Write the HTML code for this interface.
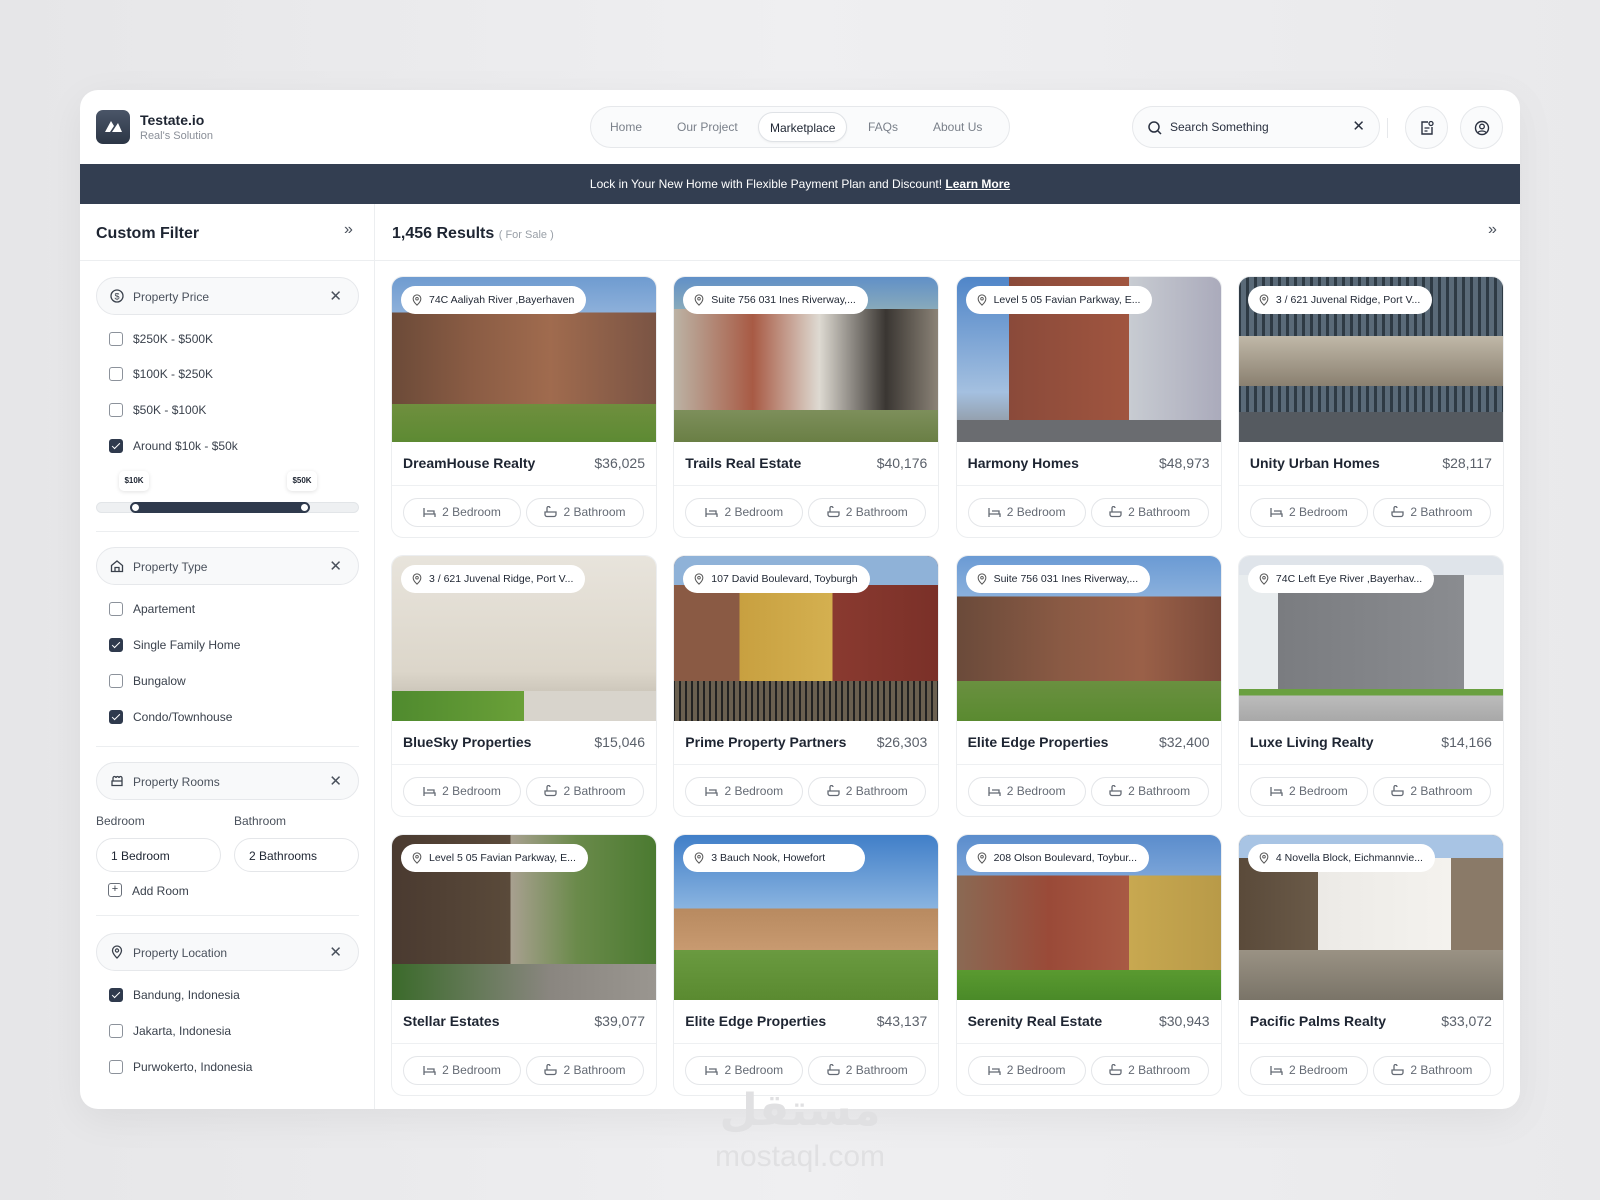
<!DOCTYPE html>
<html><head><meta charset="utf-8"><style>
*{box-sizing:border-box;margin:0;padding:0}
body{width:1600px;height:1200px;overflow:hidden;background:linear-gradient(90deg,#e6e6e8,#efeff1 50%,#e9e9eb);font-family:"Liberation Sans",sans-serif;color:#1e2532;position:relative}
.app{position:absolute;left:80px;top:90px;width:1440px;height:1019px;background:#fff;border-radius:18px;overflow:hidden;box-shadow:0 10px 40px rgba(0,0,0,.06)}
.abs{position:absolute}
.logo{left:16px;top:20px;width:34px;height:34px;border-radius:7px;background:linear-gradient(#4a5568,#2c3646)}
.brand{left:60px;top:22px;font-size:14px;font-weight:600;color:#1e2532}
.sub{left:60px;top:40px;font-size:11px;color:#8a8f98}
.nav{left:510px;top:16px;width:420px;height:42px;border:1px solid #e6e8eb;border-radius:21px;background:#fafbfc}
.nav span{position:absolute;top:13px;font-size:12px;color:#7a808a}
.nav .act{top:5px;height:30px;padding:8px 11px;background:#fff;border:1px solid #dfe2e6;border-radius:15px;color:#1e2532;box-shadow:0 1px 2px rgba(0,0,0,.05)}
.search{left:1052px;top:16px;width:248px;height:42px;border:1px solid #e6e8eb;border-radius:21px;background:#fafbfc}
.circ{top:16px;width:43px;height:43px;border:1px solid #e6e8eb;border-radius:50%;background:#fafbfc}
.banner{left:0;top:74px;width:1440px;height:40px;background:#333e51;color:#fff;font-size:12px;text-align:center;line-height:40px}
.banner u{font-weight:600}
.side{left:0;top:114px;width:295px;height:905px;border-right:1px solid #eceef0}
.hline{height:1px;background:#eceef0}
.pill{left:16px;width:263px;height:38px;border:1px solid #e6e8eb;border-radius:19px;background:#f8f9fa;font-size:12px;color:#4a515c}
.pill .t{position:absolute;left:36px;top:12px}
.pill .x{position:absolute;right:16px;top:9px;font-size:15px;color:#4a515c}
.pill svg{position:absolute;left:13px;top:11px}
.cb{left:29px;width:14px;height:14px;border:1.3px solid #8c929b;border-radius:3px}
.cb.on{background:#2f3a4d;border-color:#2f3a4d}
.cb.on:after{content:"";position:absolute;left:4px;top:1px;width:3px;height:7px;border:solid #fff;border-width:0 1.6px 1.6px 0;transform:rotate(45deg)}
.lbl{left:53px;font-size:12px;color:#3a414c}
.grid{position:absolute;left:311px;top:186px;display:grid;grid-template-columns:repeat(4,266px);column-gap:16.3px;row-gap:17px}
.card{width:266px;height:262px;border:1px solid #eceef0;border-radius:12px;position:relative;overflow:hidden;background:#fff}
.img{position:absolute;left:-1px;top:-1px;width:266px;height:166px;border-radius:12px 12px 0 0;overflow:hidden}
.loc{position:absolute;left:10px;top:10px;height:28px;padding:0 12px 0 28px;background:#fff;border-radius:14px;font-size:10.5px;line-height:28px;color:#1e2532;white-space:nowrap}
.loc svg{position:absolute;left:10px;top:8px}
.ct{position:absolute;left:11px;top:178px;font-size:14px;font-weight:600;color:#1e2532}
.pr{position:absolute;right:11px;top:178px;font-size:14px;color:#5a606a}
.dv{position:absolute;left:0;right:0;top:208px;height:1px;background:#eef0f2}
.bp{position:absolute;top:221px;height:29px;width:118px;border:1px solid #e4e6e9;border-radius:15px;font-size:12px;color:#646a74;text-align:center;line-height:27px}
.bp svg{vertical-align:-2px;margin-right:6px}
.b1{left:11px}.b2{left:134px}
</style></head><body>
<div class="app">
  <div class="abs logo"><svg width="34" height="34" viewBox="0 0 34 34"><path d="M9 22 L15 11 L18 16 L14 22Z M16 22 L22 13 L26 22Z" fill="#fff"/></svg></div>
  <div class="abs brand">Testate.io</div>
  <div class="abs sub">Real's Solution</div>
  <div class="abs nav">
    <span style="left:19px">Home</span><span style="left:86px">Our Project</span>
    <span class="act" style="left:167px">Marketplace</span>
    <span style="left:277px">FAQs</span><span style="left:342px">About Us</span>
  </div>
  <div class="abs search">
    <svg class="abs" style="left:14px;top:13px" width="16" height="16" viewBox="0 0 16 16"><circle cx="7" cy="7" r="5" fill="none" stroke="#2a3140" stroke-width="1.5"/><path d="M11 11l3 3" stroke="#2a3140" stroke-width="1.5"/></svg>
    <span class="abs" style="left:37px;top:13px;font-size:12px;color:#2a3140">Search Something</span>
    <span class="abs" style="right:14px;top:10px;font-size:15px;color:#2a3140">✕</span>
  </div>
  <div class="abs" style="left:1307px;top:28px;width:1px;height:20px;background:#e6e8eb"></div>
  <div class="abs circ" style="left:1325px"><svg class="abs" style="left:13px;top:13px" width="16" height="16" viewBox="0 0 16 16"><path d="M9 2H3v12h10V7" fill="none" stroke="#2a3140" stroke-width="1.4"/><circle cx="12" cy="3.5" r="2" fill="none" stroke="#2a3140" stroke-width="1.3"/><path d="M5.5 8h5M5.5 11h3" stroke="#2a3140" stroke-width="1.3"/></svg></div>
  <div class="abs circ" style="left:1380px"><svg class="abs" style="left:13px;top:13px" width="16" height="16" viewBox="0 0 16 16"><circle cx="8" cy="8" r="6.5" fill="none" stroke="#2a3140" stroke-width="1.4"/><circle cx="8" cy="6.5" r="2.3" fill="none" stroke="#2a3140" stroke-width="1.3"/><path d="M4 12.5c1.5-2 6.5-2 8 0" fill="none" stroke="#2a3140" stroke-width="1.3"/></svg></div>
  <div class="abs banner">Lock in Your New Home with Flexible Payment Plan and Discount! <u>Learn More</u></div>

  <div class="abs side"></div>
  <div class="abs hline" style="left:0;top:170px;width:1440px"></div>
  <div class="abs" style="left:16px;top:135px;font-size:16px;font-weight:600">Custom Filter</div>
  <div class="abs" style="left:264px;top:131px;font-size:16px;color:#4a515c">»</div>
  <div class="abs" style="left:312px;top:135px;font-size:16px;font-weight:600">1,456 Results <span style="font-size:11px;font-weight:400;color:#9aa0a8">( For Sale )</span></div>
  <div class="abs" style="left:1408px;top:131px;font-size:16px;color:#4a515c">»</div>

  <div class="abs pill" style="top:187px"><svg width="14" height="14" viewBox="0 0 14 14"><circle cx="7" cy="7" r="6" fill="none" stroke="#3a414c" stroke-width="1.3"/><text x="7" y="10.5" font-size="9" text-anchor="middle" fill="#3a414c" font-family="Liberation Sans">$</text></svg><span class="t">Property Price</span><span class="x">✕</span></div>
  <div class="abs cb" style="top:242px"></div><div class="abs lbl" style="top:242px">$250K - $500K</div>
  <div class="abs cb" style="top:277px"></div><div class="abs lbl" style="top:277px">$100K - $250K</div>
  <div class="abs cb" style="top:313px"></div><div class="abs lbl" style="top:313px">$50K - $100K</div>
  <div class="abs cb on" style="top:349px"></div><div class="abs lbl" style="top:349px">Around $10k - $50k</div>
  <div class="abs" style="left:39px;top:381px;width:30px;height:20px;background:#fff;border-radius:5px;box-shadow:0 1px 4px rgba(0,0,0,.12);font-size:8px;font-weight:700;text-align:center;line-height:20px">$10K</div>
  <div class="abs" style="left:207px;top:381px;width:30px;height:20px;background:#fff;border-radius:5px;box-shadow:0 1px 4px rgba(0,0,0,.12);font-size:8px;font-weight:700;text-align:center;line-height:20px">$50K</div>
  <div class="abs" style="left:16px;top:412px;width:263px;height:11px;background:#eef0f2;border:1px solid #e2e5e8;border-radius:6px"></div>
  <div class="abs" style="left:55px;top:412px;width:170px;height:11px;background:#2f3a4d"></div>
  <div class="abs" style="left:50px;top:412px;width:11px;height:11px;border-radius:50%;background:#fff;border:2.5px solid #2f3a4d"></div>
  <div class="abs" style="left:219px;top:412px;width:11px;height:11px;border-radius:50%;background:#fff;border:2.5px solid #2f3a4d"></div>
  <div class="abs hline" style="left:16px;top:441px;width:263px"></div>

  <div class="abs pill" style="top:457px"><svg width="14" height="14" viewBox="0 0 14 14"><path d="M1.5 6.5L7 2l5.5 4.5V12.5h-11z M5 12.5V8.5h4v4" fill="none" stroke="#3a414c" stroke-width="1.3"/></svg><span class="t">Property Type</span><span class="x">✕</span></div>
  <div class="abs cb" style="top:512px"></div><div class="abs lbl" style="top:512px">Apartement</div>
  <div class="abs cb on" style="top:548px"></div><div class="abs lbl" style="top:548px">Single Family Home</div>
  <div class="abs cb" style="top:584px"></div><div class="abs lbl" style="top:584px">Bungalow</div>
  <div class="abs cb on" style="top:620px"></div><div class="abs lbl" style="top:620px">Condo/Townhouse</div>
  <div class="abs hline" style="left:16px;top:656px;width:263px"></div>

  <div class="abs pill" style="top:672px"><svg width="14" height="14" viewBox="0 0 14 14"><path d="M2 7h10v4.5H2z M3 7V4a1.5 1.5 0 013 0M6 4a1.5 1.5 0 013 0M9 4a1.5 1.5 0 013 0V7" fill="none" stroke="#3a414c" stroke-width="1.3"/></svg><span class="t">Property Rooms</span><span class="x">✕</span></div>
  <div class="abs" style="left:16px;top:724px;font-size:12px;color:#4a515c">Bedroom</div>
  <div class="abs" style="left:154px;top:724px;font-size:12px;color:#4a515c">Bathroom</div>
  <div class="abs" style="left:16px;top:748px;width:125px;height:34px;border:1px solid #e4e6e9;border-radius:17px;font-size:12px;padding:10px 14px">1 Bedroom</div>
  <div class="abs" style="left:154px;top:748px;width:125px;height:34px;border:1px solid #e4e6e9;border-radius:17px;font-size:12px;padding:10px 14px">2 Bathrooms</div>
  <div class="abs" style="left:28px;top:793px;width:14px;height:14px;border:1.3px solid #6a707a;border-radius:3px;font-size:11px;line-height:11px;text-align:center;color:#3a414c">+</div>
  <div class="abs" style="left:52px;top:794px;font-size:12px;color:#3a414c">Add Room</div>
  <div class="abs hline" style="left:16px;top:825px;width:263px"></div>

  <div class="abs pill" style="top:843px"><svg width="14" height="14" viewBox="0 0 14 14"><path d="M7 13s4.5-4.2 4.5-7.5a4.5 4.5 0 00-9 0C2.5 8.8 7 13 7 13z" fill="none" stroke="#3a414c" stroke-width="1.3"/><circle cx="7" cy="5.5" r="1.6" fill="none" stroke="#3a414c" stroke-width="1.2"/></svg><span class="t">Property Location</span><span class="x">✕</span></div>
  <div class="abs cb on" style="top:898px"></div><div class="abs lbl" style="top:898px">Bandung, Indonesia</div>
  <div class="abs cb" style="top:934px"></div><div class="abs lbl" style="top:934px">Jakarta, Indonesia</div>
  <div class="abs cb" style="top:970px"></div><div class="abs lbl" style="top:970px">Purwokerto, Indonesia</div>

  <div class="grid">
<div class="card"><div class="img" style="background:linear-gradient(180deg,#6e9bd0 0,#8db0da 22%,transparent 22%),linear-gradient(90deg,#6b4a38 0,#8a5c44 30%,#a06b4e 60%,#7a5444 100%);"><div style="position:absolute;left:0;right:0;bottom:0;height:38px;background:linear-gradient(#6f8f3e,#5d8a33)"></div><div class="loc"><svg width="12" height="12" viewBox="0 0 14 14"><path d="M7 13s4.5-4.2 4.5-7.5a4.5 4.5 0 00-9 0C2.5 8.8 7 13 7 13z" fill="none" stroke="#555" stroke-width="1.2"/><circle cx="7" cy="5.5" r="1.5" fill="none" stroke="#555" stroke-width="1.1"/></svg>74C Aaliyah River ,Bayerhaven</div></div><div class="ct">DreamHouse Realty</div><div class="pr">$36,025</div><div class="dv"></div><div class="bp b1"><svg width="13" height="11" viewBox="0 0 13 11"><path d="M1 1v9M1 7h11v3M4 4h7v3" fill="none" stroke="#646a74" stroke-width="1.3"/></svg>2 Bedroom</div><div class="bp b2"><svg width="13" height="12" viewBox="0 0 13 12"><path d="M3 6V2a1.5 1.5 0 013 0M1 6h11v2.5a2 2 0 01-2 2H3a2 2 0 01-2-2z" fill="none" stroke="#646a74" stroke-width="1.3"/></svg>2 Bathroom</div></div>

<div class="card"><div class="img" style="background:linear-gradient(180deg,#5f8fc8 0,#8ab 20%,transparent 20%),linear-gradient(90deg,#bcb4a6 0,#a85a44 30%,#dedad2 55%,#3a3632 80%,#8c8478 100%);"><div style="position:absolute;left:0;right:0;bottom:0;height:32px;background:linear-gradient(#7d8f5b,#6a7f45)"></div><div class="loc"><svg width="12" height="12" viewBox="0 0 14 14"><path d="M7 13s4.5-4.2 4.5-7.5a4.5 4.5 0 00-9 0C2.5 8.8 7 13 7 13z" fill="none" stroke="#555" stroke-width="1.2"/><circle cx="7" cy="5.5" r="1.5" fill="none" stroke="#555" stroke-width="1.1"/></svg>Suite 756 031 Ines Riverway,...</div></div><div class="ct">Trails Real Estate</div><div class="pr">$40,176</div><div class="dv"></div><div class="bp b1"><svg width="13" height="11" viewBox="0 0 13 11"><path d="M1 1v9M1 7h11v3M4 4h7v3" fill="none" stroke="#646a74" stroke-width="1.3"/></svg>2 Bedroom</div><div class="bp b2"><svg width="13" height="12" viewBox="0 0 13 12"><path d="M3 6V2a1.5 1.5 0 013 0M1 6h11v2.5a2 2 0 01-2 2H3a2 2 0 01-2-2z" fill="none" stroke="#646a74" stroke-width="1.3"/></svg>2 Bathroom</div></div>

<div class="card"><div class="img" style="background:linear-gradient(90deg,transparent 0,transparent 20%,#8a4a3a 20%,#a0553f 65%,#c8ccd2 65%,#aab 100%),linear-gradient(180deg,#4f85c8,#a4c0e0 70%,#888 100%);"><div style="position:absolute;left:0;right:0;bottom:0;height:22px;background:#6a6c70"></div><div class="loc"><svg width="12" height="12" viewBox="0 0 14 14"><path d="M7 13s4.5-4.2 4.5-7.5a4.5 4.5 0 00-9 0C2.5 8.8 7 13 7 13z" fill="none" stroke="#555" stroke-width="1.2"/><circle cx="7" cy="5.5" r="1.5" fill="none" stroke="#555" stroke-width="1.1"/></svg>Level 5 05 Favian Parkway, E...</div></div><div class="ct">Harmony Homes</div><div class="pr">$48,973</div><div class="dv"></div><div class="bp b1"><svg width="13" height="11" viewBox="0 0 13 11"><path d="M1 1v9M1 7h11v3M4 4h7v3" fill="none" stroke="#646a74" stroke-width="1.3"/></svg>2 Bedroom</div><div class="bp b2"><svg width="13" height="12" viewBox="0 0 13 12"><path d="M3 6V2a1.5 1.5 0 013 0M1 6h11v2.5a2 2 0 01-2 2H3a2 2 0 01-2-2z" fill="none" stroke="#646a74" stroke-width="1.3"/></svg>2 Bathroom</div></div>

<div class="card"><div class="img" style="background:repeating-linear-gradient(90deg,#2e3a44 0,#2e3a44 3px,#5a6a78 3px,#5a6a78 8px),#445;"><div style="position:absolute;left:0;right:0;top:60px;height:50px;background:linear-gradient(#c0b8a8,#8a8070)"></div><div style="position:absolute;left:0;right:0;bottom:0;height:30px;background:#555a60"></div><div class="loc"><svg width="12" height="12" viewBox="0 0 14 14"><path d="M7 13s4.5-4.2 4.5-7.5a4.5 4.5 0 00-9 0C2.5 8.8 7 13 7 13z" fill="none" stroke="#555" stroke-width="1.2"/><circle cx="7" cy="5.5" r="1.5" fill="none" stroke="#555" stroke-width="1.1"/></svg>3 / 621 Juvenal Ridge, Port V...</div></div><div class="ct">Unity Urban Homes</div><div class="pr">$28,117</div><div class="dv"></div><div class="bp b1"><svg width="13" height="11" viewBox="0 0 13 11"><path d="M1 1v9M1 7h11v3M4 4h7v3" fill="none" stroke="#646a74" stroke-width="1.3"/></svg>2 Bedroom</div><div class="bp b2"><svg width="13" height="12" viewBox="0 0 13 12"><path d="M3 6V2a1.5 1.5 0 013 0M1 6h11v2.5a2 2 0 01-2 2H3a2 2 0 01-2-2z" fill="none" stroke="#646a74" stroke-width="1.3"/></svg>2 Bathroom</div></div>

<div class="card"><div class="img" style="background:linear-gradient(180deg,#e8e4dc 0,#dcd6ca 70%,#b8b2a6 100%);"><div style="position:absolute;left:0;right:0;bottom:0;height:30px;background:linear-gradient(90deg,#4f8a2e,#6aa038 50%,#d8d4cc 50%)"></div><div class="loc"><svg width="12" height="12" viewBox="0 0 14 14"><path d="M7 13s4.5-4.2 4.5-7.5a4.5 4.5 0 00-9 0C2.5 8.8 7 13 7 13z" fill="none" stroke="#555" stroke-width="1.2"/><circle cx="7" cy="5.5" r="1.5" fill="none" stroke="#555" stroke-width="1.1"/></svg>3 / 621 Juvenal Ridge, Port V...</div></div><div class="ct">BlueSky Properties</div><div class="pr">$15,046</div><div class="dv"></div><div class="bp b1"><svg width="13" height="11" viewBox="0 0 13 11"><path d="M1 1v9M1 7h11v3M4 4h7v3" fill="none" stroke="#646a74" stroke-width="1.3"/></svg>2 Bedroom</div><div class="bp b2"><svg width="13" height="12" viewBox="0 0 13 12"><path d="M3 6V2a1.5 1.5 0 013 0M1 6h11v2.5a2 2 0 01-2 2H3a2 2 0 01-2-2z" fill="none" stroke="#646a74" stroke-width="1.3"/></svg>2 Bathroom</div></div>

<div class="card"><div class="img" style="background:linear-gradient(90deg,#8a5a44 0,#8a5a44 25%,#c8a040 25%,#d4b050 60%,#8a3a30 60%,#7a3028 100%);"><div style="position:absolute;left:0;right:0;top:0;height:30px;background:#8fb2d8"></div><div style="position:absolute;left:0;right:0;bottom:0;height:40px;background:repeating-linear-gradient(90deg,#222 0,#222 2px,#6a6050 2px,#6a6050 6px)"></div><div class="loc"><svg width="12" height="12" viewBox="0 0 14 14"><path d="M7 13s4.5-4.2 4.5-7.5a4.5 4.5 0 00-9 0C2.5 8.8 7 13 7 13z" fill="none" stroke="#555" stroke-width="1.2"/><circle cx="7" cy="5.5" r="1.5" fill="none" stroke="#555" stroke-width="1.1"/></svg>107 David Boulevard, Toyburgh</div></div><div class="ct">Prime Property Partners</div><div class="pr">$26,303</div><div class="dv"></div><div class="bp b1"><svg width="13" height="11" viewBox="0 0 13 11"><path d="M1 1v9M1 7h11v3M4 4h7v3" fill="none" stroke="#646a74" stroke-width="1.3"/></svg>2 Bedroom</div><div class="bp b2"><svg width="13" height="12" viewBox="0 0 13 12"><path d="M3 6V2a1.5 1.5 0 013 0M1 6h11v2.5a2 2 0 01-2 2H3a2 2 0 01-2-2z" fill="none" stroke="#646a74" stroke-width="1.3"/></svg>2 Bathroom</div></div>

<div class="card"><div class="img" style="background:linear-gradient(180deg,#6a9ad4 0,#8ab0dc 25%,transparent 25%),linear-gradient(90deg,#6a4a3a 0,#8a5a44 40%,#9a6048 70%,#7a4a3a 100%);"><div style="position:absolute;left:0;right:0;bottom:0;height:40px;background:linear-gradient(#6a9040,#5a8a30)"></div><div class="loc"><svg width="12" height="12" viewBox="0 0 14 14"><path d="M7 13s4.5-4.2 4.5-7.5a4.5 4.5 0 00-9 0C2.5 8.8 7 13 7 13z" fill="none" stroke="#555" stroke-width="1.2"/><circle cx="7" cy="5.5" r="1.5" fill="none" stroke="#555" stroke-width="1.1"/></svg>Suite 756 031 Ines Riverway,...</div></div><div class="ct">Elite Edge Properties</div><div class="pr">$32,400</div><div class="dv"></div><div class="bp b1"><svg width="13" height="11" viewBox="0 0 13 11"><path d="M1 1v9M1 7h11v3M4 4h7v3" fill="none" stroke="#646a74" stroke-width="1.3"/></svg>2 Bedroom</div><div class="bp b2"><svg width="13" height="12" viewBox="0 0 13 12"><path d="M3 6V2a1.5 1.5 0 013 0M1 6h11v2.5a2 2 0 01-2 2H3a2 2 0 01-2-2z" fill="none" stroke="#646a74" stroke-width="1.3"/></svg>2 Bathroom</div></div>

<div class="card"><div class="img" style="background:linear-gradient(90deg,#e8ecee 0,#e8ecee 15%,#7a7c80 15%,#8a8c90 85%,#eef0f2 85%);"><div style="position:absolute;left:0;right:0;top:0;height:20px;background:#dfe4ea"></div><div style="position:absolute;left:0;right:0;bottom:0;height:32px;background:linear-gradient(#6aa040 0,#6aa040 20%,#bcbcbc 20%,#a8a8a8)"></div><div class="loc"><svg width="12" height="12" viewBox="0 0 14 14"><path d="M7 13s4.5-4.2 4.5-7.5a4.5 4.5 0 00-9 0C2.5 8.8 7 13 7 13z" fill="none" stroke="#555" stroke-width="1.2"/><circle cx="7" cy="5.5" r="1.5" fill="none" stroke="#555" stroke-width="1.1"/></svg>74C Left Eye River ,Bayerhav...</div></div><div class="ct">Luxe Living Realty</div><div class="pr">$14,166</div><div class="dv"></div><div class="bp b1"><svg width="13" height="11" viewBox="0 0 13 11"><path d="M1 1v9M1 7h11v3M4 4h7v3" fill="none" stroke="#646a74" stroke-width="1.3"/></svg>2 Bedroom</div><div class="bp b2"><svg width="13" height="12" viewBox="0 0 13 12"><path d="M3 6V2a1.5 1.5 0 013 0M1 6h11v2.5a2 2 0 01-2 2H3a2 2 0 01-2-2z" fill="none" stroke="#646a74" stroke-width="1.3"/></svg>2 Bathroom</div></div>

<div class="card"><div class="img" style="background:linear-gradient(90deg,#4a3a30 0,#5a4a3a 45%,#a8a090 45%,#6a8a4a 70%,#4a7a30 100%);"><div style="position:absolute;left:0;right:0;bottom:0;height:36px;background:linear-gradient(90deg,#3a6a2a,#8a8680 60%,#9a9690)"></div><div class="loc"><svg width="12" height="12" viewBox="0 0 14 14"><path d="M7 13s4.5-4.2 4.5-7.5a4.5 4.5 0 00-9 0C2.5 8.8 7 13 7 13z" fill="none" stroke="#555" stroke-width="1.2"/><circle cx="7" cy="5.5" r="1.5" fill="none" stroke="#555" stroke-width="1.1"/></svg>Level 5 05 Favian Parkway, E...</div></div><div class="ct">Stellar Estates</div><div class="pr">$39,077</div><div class="dv"></div><div class="bp b1"><svg width="13" height="11" viewBox="0 0 13 11"><path d="M1 1v9M1 7h11v3M4 4h7v3" fill="none" stroke="#646a74" stroke-width="1.3"/></svg>2 Bedroom</div><div class="bp b2"><svg width="13" height="12" viewBox="0 0 13 12"><path d="M3 6V2a1.5 1.5 0 013 0M1 6h11v2.5a2 2 0 01-2 2H3a2 2 0 01-2-2z" fill="none" stroke="#646a74" stroke-width="1.3"/></svg>2 Bathroom</div></div>

<div class="card"><div class="img" style="background:linear-gradient(180deg,#3f7ec8 0,#8ab4e0 45%,#b88a60 45%,#c89a70 70%,#6a9a40 70%,#5a8a30 100%);"><div class="loc" style="padding-right:40px"><svg width="12" height="12" viewBox="0 0 14 14"><path d="M7 13s4.5-4.2 4.5-7.5a4.5 4.5 0 00-9 0C2.5 8.8 7 13 7 13z" fill="none" stroke="#555" stroke-width="1.2"/><circle cx="7" cy="5.5" r="1.5" fill="none" stroke="#555" stroke-width="1.1"/></svg>3 Bauch Nook, Howefort</div></div><div class="ct">Elite Edge Properties</div><div class="pr">$43,137</div><div class="dv"></div><div class="bp b1"><svg width="13" height="11" viewBox="0 0 13 11"><path d="M1 1v9M1 7h11v3M4 4h7v3" fill="none" stroke="#646a74" stroke-width="1.3"/></svg>2 Bedroom</div><div class="bp b2"><svg width="13" height="12" viewBox="0 0 13 12"><path d="M3 6V2a1.5 1.5 0 013 0M1 6h11v2.5a2 2 0 01-2 2H3a2 2 0 01-2-2z" fill="none" stroke="#646a74" stroke-width="1.3"/></svg>2 Bathroom</div></div>

<div class="card"><div class="img" style="background:linear-gradient(180deg,#5a8ccc 0,#7aa4d8 25%,transparent 25%),linear-gradient(90deg,#8a6a54 0,#9a4a38 35%,#a85a44 65%,#c8a850 65%,#b89a48 100%);"><div style="position:absolute;left:0;right:0;bottom:0;height:30px;background:linear-gradient(#5a9a30,#4a8a28)"></div><div class="loc"><svg width="12" height="12" viewBox="0 0 14 14"><path d="M7 13s4.5-4.2 4.5-7.5a4.5 4.5 0 00-9 0C2.5 8.8 7 13 7 13z" fill="none" stroke="#555" stroke-width="1.2"/><circle cx="7" cy="5.5" r="1.5" fill="none" stroke="#555" stroke-width="1.1"/></svg>208 Olson Boulevard, Toybur...</div></div><div class="ct">Serenity Real Estate</div><div class="pr">$30,943</div><div class="dv"></div><div class="bp b1"><svg width="13" height="11" viewBox="0 0 13 11"><path d="M1 1v9M1 7h11v3M4 4h7v3" fill="none" stroke="#646a74" stroke-width="1.3"/></svg>2 Bedroom</div><div class="bp b2"><svg width="13" height="12" viewBox="0 0 13 12"><path d="M3 6V2a1.5 1.5 0 013 0M1 6h11v2.5a2 2 0 01-2 2H3a2 2 0 01-2-2z" fill="none" stroke="#646a74" stroke-width="1.3"/></svg>2 Bathroom</div></div>

<div class="card"><div class="img" style="background:linear-gradient(90deg,#5a4a3a 0,#6a5a48 30%,#eceae6 30%,#f4f2ee 80%,#8a7a68 80%);"><div style="position:absolute;left:0;right:0;top:0;height:24px;background:#a8c4e4"></div><div style="position:absolute;left:0;right:0;bottom:0;height:50px;background:linear-gradient(#9a9284,#7a7468)"></div><div class="loc"><svg width="12" height="12" viewBox="0 0 14 14"><path d="M7 13s4.5-4.2 4.5-7.5a4.5 4.5 0 00-9 0C2.5 8.8 7 13 7 13z" fill="none" stroke="#555" stroke-width="1.2"/><circle cx="7" cy="5.5" r="1.5" fill="none" stroke="#555" stroke-width="1.1"/></svg>4 Novella Block, Eichmannvie...</div></div><div class="ct">Pacific Palms Realty</div><div class="pr">$33,072</div><div class="dv"></div><div class="bp b1"><svg width="13" height="11" viewBox="0 0 13 11"><path d="M1 1v9M1 7h11v3M4 4h7v3" fill="none" stroke="#646a74" stroke-width="1.3"/></svg>2 Bedroom</div><div class="bp b2"><svg width="13" height="12" viewBox="0 0 13 12"><path d="M3 6V2a1.5 1.5 0 013 0M1 6h11v2.5a2 2 0 01-2 2H3a2 2 0 01-2-2z" fill="none" stroke="#646a74" stroke-width="1.3"/></svg>2 Bathroom</div></div>
  </div>
</div>
<div class="abs" style="left:700px;top:1085px;width:200px;text-align:center;font-size:44px;font-weight:700;color:#e0e0e2;font-family:'Liberation Sans','DejaVu Sans',sans-serif">مستقل</div>
<div class="abs" style="left:650px;top:1140px;width:300px;text-align:center;font-size:30px;color:#e0e0e2">mostaql.com</div>
</body></html>
